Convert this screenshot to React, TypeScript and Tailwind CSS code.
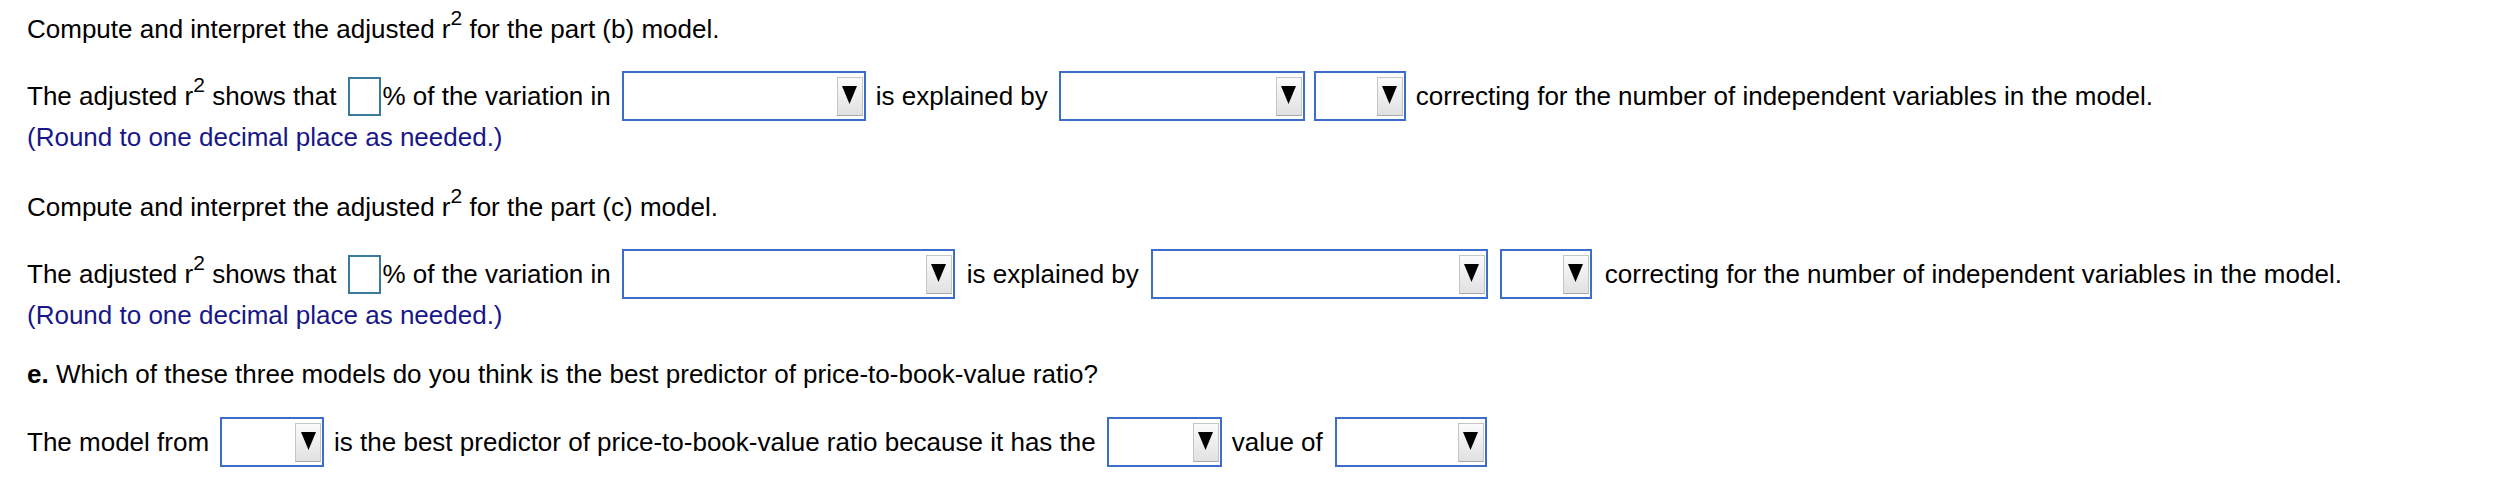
import React from 'react';

// dropdown with the little grey arrow button on the right
const Dropdown = ({ width }: { width: string }) => (
  <div className={`${width} flex h-[50px] shrink-0 items-center justify-end border-2 border-[#3d6dca] bg-white pr-px`}>
    <div className="flex h-[39px] w-[26px] justify-center border border-[#c6c6c6] border-b-[#a8a8a8] bg-linear-to-b from-[#fbfbfb] to-[#e1e1e1] pt-[8px]">
      <svg width="15" height="18" viewBox="0 0 15 18">
        <polygon points="0,0 15,0 7.5,18" fill="#000" />
      </svg>
    </div>
  </div>
);

const AnswerBox = () => (
  <div className="ml-[12px] mr-px h-[39px] w-[33px] shrink-0 border-2 border-[#3a7a9c] bg-white" />
);

const R2 = () => (
  <>
    r<sup className="-top-[13px] text-[21px]">2</sup>
  </>
);

interface InterpretProps {
  part: string;
  first: string;
  second: string;
  gaps: [string, string, string, string, string];
}

const Interpret = ({ part, first, second, gaps }: InterpretProps) => (
  <>
    <p className="h-[40px] leading-[40px]">
      Compute and interpret the adjusted <R2 /> for the part ({part}) model.
    </p>
    <div className="mt-[22px] flex h-[50px] items-center leading-[30px]">
      <span>
        The adjusted <R2 /> shows that
      </span>
      <AnswerBox />
      <span>% of the variation in</span>
      <div className={gaps[0]}>
        <Dropdown width={first} />
      </div>
      <span className={gaps[1]}>is explained by</span>
      <div className={gaps[2]}>
        <Dropdown width={second} />
      </div>
      <div className={gaps[3]}>
        <Dropdown width="w-[92px]" />
      </div>
      <span className={gaps[4]}>correcting for the number of independent variables in the model.</span>
    </div>
    <p className="mt-px h-[30px] leading-[30px] text-[#17178a]">(Round to one decimal place as needed.)</p>
  </>
);

export default function App() {
  return (
    <div
      className="h-[504px] w-full bg-white pl-[27px] pt-[9px] text-[26px] text-black"
      style={{ fontFamily: '"Liberation Sans", Arial, sans-serif' }}
    >
      <Interpret
        part="b"
        first="w-[244px]"
        second="w-[246px]"
        gaps={['ml-[11px]', 'ml-[10px]', 'ml-[11px]', 'ml-[9px]', 'ml-[10px]']}
      />

      <div className="mt-[35px]">
        <Interpret
          part="c"
          first="w-[333px]"
          second="w-[337px]"
          gaps={['ml-[11px]', 'ml-[12px]', 'ml-[12px]', 'ml-[12px]', 'ml-[13px]']}
        />
      </div>

      <p className="mt-[24px] h-[40px] leading-[40px]">
        <span className="font-bold">e.</span> Which of these three models do you think is the best predictor of
        price-to-book-value ratio?
      </p>

      <div className="mt-[23px] flex h-[50px] items-center leading-[30px]">
        <span>The model from</span>
        <div className="ml-[11px]">
          <Dropdown width="w-[104px]" />
        </div>
        <span className="ml-[10px]">is the best predictor of price-to-book-value ratio because it has the</span>
        <div className="ml-[11px]">
          <Dropdown width="w-[115px]" />
        </div>
        <span className="ml-[10px]">value of</span>
        <div className="ml-[12px]">
          <Dropdown width="w-[152px]" />
        </div>
      </div>
    </div>
  );
}
